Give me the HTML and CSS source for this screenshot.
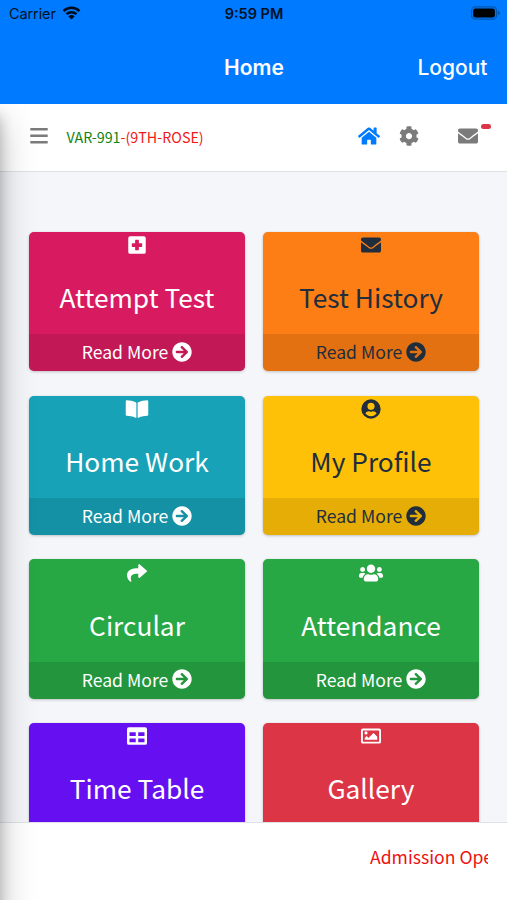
FILE: index.html
```
<!DOCTYPE html>
<html lang="en">
<head>
<meta charset="utf-8">
<title>Home</title>
<link rel="stylesheet" href="styles.css">
</head>
<body>
<svg class="defs" aria-hidden="true">
  <symbol id="arrow" viewBox="0 0 512 512"><path d="M256 8c137 0 248 111 248 248S393 504 256 504 8 393 8 256 119 8 256 8zm-28.900 143.600l75.500 72.400H120c-13.300 0-24 10.700-24 24v16c0 13.300 10.700 24 24 24h182.600l-75.500 72.400c-9.700 9.300-9.900 24.800-.4 34.300l11 10.900c9.400 9.400 24.600 9.400 33.900 0L404.300 273c9.400-9.400 9.400-24.600 0-33.900L271.600 106.300c-9.400-9.400-24.600-9.400-33.900 0l-11 10.900c-9.500 9.600-9.300 25.100.4 34.400z"/></symbol>
  <symbol id="envelope" viewBox="0 0 512 512"><path d="M502.300 190.800c3.900-3.100 9.700-.2 9.700 4.700V400c0 26.500-21.500 48-48 48H48c-26.500 0-48-21.500-48-48V195.600c0-5 5.700-7.800 9.700-4.700 22.400 17.400 52.100 39.500 154.100 113.600 21.100 15.400 56.700 47.800 92.200 47.600 35.700.3 72-32.800 92.300-47.600 102-74.100 131.600-96.300 154-113.700zM256 320c23.200.4 56.600-29.200 73.400-41.400 132.700-96.300 142.800-104.700 173.400-128.700 5.800-4.500 9.200-11.500 9.200-18.900v-19c0-26.500-21.500-48-48-48H48c-26.500 0-48 21.500-48 48v19c0 7.400 3.400 14.300 9.200 18.900 30.600 23.900 40.700 32.400 173.400 128.700 16.800 12.200 50.200 41.800 73.400 41.400z"/></symbol>
</svg>

<header class="appbar">
  <div class="status">
    <div class="carrier">Carrier
      <svg class="wifi" viewBox="0 0 18 14"><g fill="none" stroke="currentColor" stroke-width="2.500"><path d="M1 5.100a11.400 11.400 0 0 1 16 0"/><path d="M4 8.200a7.100 7.100 0 0 1 10 0"/></g><path d="M9 13.500 5.900 10.400a4.400 4.400 0 0 1 6.200 0z" fill="currentColor"/></svg>
    </div>
    <div class="clock">9:59 PM</div>
    <svg class="battery" viewBox="0 0 30 14"><rect x=".6" y=".6" width="25.800" height="12.800" rx="3.800" fill="none" stroke="#0055ad" stroke-width="1.200"/><rect x="2.300" y="2.300" width="22.400" height="9.400" rx="2.200"/><path d="M27.800 4.700q2 .6 2 2.300t-2 2.300z" fill="#0055ad"/></svg>
  </div>
  <div class="titlebar"><span></span><h1>Home</h1><a class="logout">Logout</a></div>
</header>

<div class="page">
  <nav class="navbar">
    <svg class="bars" viewBox="0 0 18 16"><path d="M.3 1.300h17.400M.3 7.800h17.400M.3 14.300h17.400" stroke="currentColor" stroke-width="2.500"/></svg>
    <div class="user"><span class="id">VAR-991</span>-(9TH-ROSE)</div>
    <svg class="home" viewBox="0 0 576 512"><path d="M280.400 148.300L96 300.100V464a16 16 0 0 0 16 16l112.100-.3a16 16 0 0 0 15.900-16V368a16 16 0 0 1 16-16h64a16 16 0 0 1 16 16v95.600a16 16 0 0 0 16 16.100L464 480a16 16 0 0 0 16-16V300L295.700 148.300a12.200 12.200 0 0 0-15.300 0zM571.600 251.500L488 182.600V44.100a12 12 0 0 0-12-12h-56a12 12 0 0 0-12 12v72.600L318.500 43a48 48 0 0 0-61 0L4.300 251.500a12 12 0 0 0-1.600 16.900l25.500 31a12 12 0 0 0 16.900 1.600l235.300-193.700a12.200 12.200 0 0 1 15.300 0L530.900 301a12 12 0 0 0 16.900-1.600l25.500-31a12 12 0 0 0-1.700-16.900z"/></svg>
    <svg class="gear" viewBox="0 0 512 512"><path d="M487.400 315.700l-42.600-24.600c4.300-23.200 4.300-47 0-70.200l42.600-24.600c4.900-2.800 7.100-8.600 5.500-14-11.100-35.600-30-67.800-54.700-94.600-3.800-4.100-10-5.100-14.800-2.300L380.800 110c-17.900-15.400-38.500-27.300-60.800-35.100V25.800c0-5.600-3.900-10.500-9.400-11.700-36.700-8.200-74.300-7.800-109.200 0-5.500 1.200-9.400 6.100-9.400 11.700V75c-22.200 7.900-42.800 19.800-60.800 35.100L88.700 85.500c-4.900-2.800-11-1.900-14.800 2.300-24.700 26.700-43.600 58.900-54.700 94.600-1.700 5.400.6 11.200 5.500 14L67.300 221c-4.300 23.200-4.300 47 0 70.200l-42.600 24.600c-4.900 2.800-7.100 8.600-5.500 14 11.100 35.600 30 67.800 54.700 94.600 3.800 4.100 10 5.100 14.800 2.300l42.600-24.600c17.900 15.400 38.500 27.300 60.800 35.100v49.200c0 5.600 3.900 10.500 9.400 11.700 36.700 8.200 74.300 7.800 109.200 0 5.500-1.200 9.400-6.100 9.400-11.700v-49.200c22.200-7.900 42.800-19.800 60.800-35.100l42.600 24.600c4.900 2.800 11 1.900 14.800-2.300 24.700-26.700 43.600-58.900 54.700-94.600 1.500-5.500-.7-11.300-5.600-14.100zM256 336c-44.100 0-80-35.900-80-80s35.900-80 80-80 80 35.900 80 80-35.900 80-80 80z"/></svg>
    <div class="mail"><svg><use href="#envelope"/></svg><i class="badge"></i></div>
  </nav>

  <main class="grid">
    <a class="card pink">
      <svg class="icon" viewBox="0 0 448 512"><path fill-rule="evenodd" d="M48 32h352a48 48 0 0 1 48 48v352a48 48 0 0 1-48 48H48a48 48 0 0 1-48-48V80a48 48 0 0 1 48-48zM188 124q-12 0-12 12v72h-72q-12 0-12 12v72q0 12 12 12h72v72q0 12 12 12h72q12 0 12-12v-72h72q12 0 12-12v-72q0-12-12-12h-72v-72q0-12-12-12z"/></svg>
      <h2>Attempt Test</h2><div class="more">Read More <svg><use href="#arrow"/></svg></div>
    </a>
    <a class="card orange">
      <svg class="icon" viewBox="0 0 512 512"><use href="#envelope"/></svg>
      <h2>Test History</h2><div class="more">Read More <svg><use href="#arrow"/></svg></div>
    </a>
    <a class="card teal">
      <svg class="icon" viewBox="0 0 576 512"><path d="M542.200 32.100c-54.800 3.100-163.700 14.400-231 55.600-4.600 2.800-7.300 7.900-7.300 13.200v363.900c0 11.600 12.600 18.900 23.300 13.500 69.200-34.800 169.200-44.300 218.700-46.900 16.900-.9 30-14.400 30-30.700V62.800c.1-17.700-15.300-31.700-33.700-30.700zM264.700 87.600C197.500 46.400 88.600 35.200 33.800 32.100 15.400 31 0 45 0 62.800V400.600c0 16.300 13.100 29.900 30.100 30.700 49.500 2.600 149.600 12.100 218.800 46.900 10.600 5.400 23.200-1.900 23.200-13.400V100.700c0-5.300-2.700-10.300-7.400-13.100z"/></svg>
      <h2>Home Work</h2><div class="more">Read More <svg><use href="#arrow"/></svg></div>
    </a>
    <a class="card yellow">
      <svg class="icon" viewBox="0 0 512 512"><path fill-rule="evenodd" d="M256 8a248 248 0 1 1 0 496 248 248 0 0 1 0-496zm0 88a92 92 0 1 0 0 184 92 92 0 0 0 0-184zm0 344c58 0 109-25 143-66-18-35-53-58-95-58-9 0-23 12-48 12s-38-12-48-12c-42 0-77 23-95 58 34 41 85 66 143 66z"/></svg>
      <h2>My Profile</h2><div class="more">Read More <svg><use href="#arrow"/></svg></div>
    </a>
    <a class="card green">
      <svg class="icon" viewBox="0 0 512 512"><path d="M503.700 189.800L327.700 37.900C312.300 24.500 288 35.300 288 56v80.100C127.400 137.900 0 170.100 0 322.300c0 61.400 39.600 122.300 83.300 154.100 13.700 9.900 33.100-2.500 28.100-18.600C66.100 312.800 132.900 274.300 288 272.100V360c0 20.700 24.300 31.500 39.700 18.200l176-152c11.100-9.600 11.100-26.800 0-36.400z"/></svg>
      <h2>Circular</h2><div class="more">Read More <svg><use href="#arrow"/></svg></div>
    </a>
    <a class="card green">
      <svg class="icon" viewBox="0 0 640 512"><path d="M96 224c35.300 0 64-28.700 64-64s-28.700-64-64-64-64 28.700-64 64 28.700 64 64 64zm448 0c35.300 0 64-28.700 64-64s-28.700-64-64-64-64 28.700-64 64 28.700 64 64 64zm32 32h-64c-17.600 0-33.500 7.100-45.100 18.600 40.300 22.100 68.900 62 75.100 109.400h66c17.700 0 32-14.300 32-32v-32c0-35.300-28.700-64-64-64zm-256 0c61.900 0 112-50.100 112-112S381.900 32 320 32 208 82.100 208 144s50.100 112 112 112zm76.800 32h-8.300c-20.800 10-43.900 16-68.500 16s-47.600-6-68.500-16h-8.300C179.600 288 128 339.600 128 403.200V432c0 26.500 21.500 48 48 48h288c26.500 0 48-21.500 48-48v-28.800c0-63.600-51.600-115.200-115.200-115.200zm-223.700-13.400C161.500 263.100 145.600 256 128 256H64c-35.300 0-64 28.700-64 64v32c0 17.700 14.300 32 32 32h65.900c6.300-47.400 34.900-87.300 75.200-109.400z"/></svg>
      <h2>Attendance</h2><div class="more">Read More <svg><use href="#arrow"/></svg></div>
    </a>
    <a class="card indigo">
      <svg class="icon" viewBox="0 0 512 512"><path fill-rule="evenodd" d="M48 32h416a48 48 0 0 1 48 48v352a48 48 0 0 1-48 48H48a48 48 0 0 1-48-48V80a48 48 0 0 1 48-48zM64 160v96h160v-96zm224 0v96h160v-96zM64 320v96h160v-96zm224 0v96h160v-96z"/></svg>
      <h2>Time Table</h2>
    </a>
    <a class="card red">
      <svg class="icon" viewBox="0 0 512 512"><path fill-rule="evenodd" d="M48 64h416a48 48 0 0 1 48 48v288a48 48 0 0 1-48 48H48a48 48 0 0 1-48-48V112a48 48 0 0 1 48-48zm6 48q-6 0-6 6v276q0 6 6 6h404q6 0 6-6V118q0-6-6-6zM128 136a40 40 0 1 1 0 80 40 40 0 0 1 0-80zM96 352v-48l39.500-39.500q8.500-8.500 17 0L192 304l119.500-119.500q8.500-8.500 17 0L416 272v80z"/></svg>
      <h2>Gallery</h2>
    </a>
  </main>

  <footer class="ticker"><div class="ticker-view"><span>Admission Open</span></div></footer>
</div>
</body>
</html>
```
FILE: styles.css
```
* { box-sizing: border-box; }
body {
  margin: 0;
  height: 900px;
  overflow: hidden;
  display: flex;
  flex-direction: column;
  background: #f4f6f9;
  font-family: "Noto Sans CJK SC", "Open Sans", sans-serif;
}
svg { display: block; fill: currentColor; }
h1, h2 { margin: 0; font-weight: 400; }
.defs { position: absolute; width: 0; height: 0; }

.appbar {
  flex: none;
  height: 103.500px;
  background: #007aff;
  font-family: Inter, sans-serif;
}
.status {
  display: grid;
  grid-template-columns: 1fr auto 1fr;
  align-items: center;
  height: 28px;
  padding: 0 7px 0 9px;
  color: #001126;
  font-size: 14.500px;
}
.carrier { display: flex; align-items: center; gap: 6px; margin-top: -2px; letter-spacing: -.1px; }
.wifi { width: 19px; height: 14px; margin-top: -1px; color: #000b1a; }
.clock { font-weight: 600; margin-top: -1px; margin-right: 1px; }
.battery { width: 29px; height: 14px; justify-self: end; margin-top: -2px; color: #000; }
.titlebar {
  display: grid;
  grid-template-columns: 1fr auto 1fr;
  align-items: center;
  height: 76px;
  padding: 2px 19.500px 0 20.500px;
  color: #fff;
}
.titlebar h1, .logout { font-size: 21px; font-weight: 600; }
.logout { justify-self: end; font-weight: 550; }

.page {
  position: relative;
  flex: 1;
  min-height: 0;
  overflow: hidden;
  display: flex;
  flex-direction: column;
}
/* shadow cast by the collapsed drawer */
.page::before {
  content: "";
  position: absolute;
  z-index: 5;
  top: 0;
  bottom: -60px;
  left: -300px;
  width: 300px;
  box-shadow: 0 17px 34px rgba(0, 0, 0, .25), 0 12px 12px rgba(0, 0, 0, .22);
}

.navbar {
  flex: none;
  display: flex;
  align-items: center;
  height: 68.500px;
  padding: 0 16px 2px 29.500px;
  background: #fff;
  border-bottom: 1px solid #dee2e6;
  color: #7b7b7b;
}
.bars { width: 18px; height: 16px; }
.user { margin: 2px 0 0 19px; font-size: 14.300px; line-height: 20px; color: #f01818; white-space: nowrap; }
.user .id { color: #108410; }
.home { width: 22px; height: 20px; margin-left: auto; color: #007bff; }
.gear { width: 20px; height: 20px; margin-left: 19px; }
.mail { position: relative; margin-left: 39px; margin-right: 13px; }
.mail svg { width: 20px; height: 20px; }
.badge {
  position: absolute;
  left: 23px;
  top: -2px;
  width: 10px;
  height: 5px;
  border-radius: 2.500px;
  background: #dc3545;
}

.grid {
  flex: 1;
  min-height: 0;
  overflow: hidden;
  display: grid;
  grid-template-columns: 216px 216px;
  grid-auto-rows: 139.400px;
  gap: 24.300px 18px;
  align-content: start;
  padding: 60px 28px 0 29px;
}
.card {
  display: flex;
  flex-direction: column;
  align-items: center;
  overflow: hidden;
  border-radius: 5px;
  color: #fff;
  box-shadow: 0 1px 3px rgba(0, 0, 0, .2), 0 0 1px rgba(0, 0, 0, .13);
}
.icon { height: 20px; width: 24px; margin: 3.400px 1px 0 0; }
.card h2 {
  margin-top: 21.900px;
  height: 40px;
  line-height: 40px;
  font-size: 26.300px;
  white-space: nowrap;
}
.more {
  display: flex;
  align-items: center;
  justify-content: center;
  gap: 4px;
  align-self: stretch;
  margin-top: auto;
  height: 37px;
  padding-bottom: 2px;
  background: rgba(0, 0, 0, .1);
  font-size: 17.600px;
  line-height: 35px;
}
.more svg { width: 20px; height: 20px; }
.pink { background: #d81b60; }
.orange { background: #fd7e14; color: #1f2d3d; }
.teal { background: #17a2b8; }
.yellow { background: #ffc107; color: #1f2d3d; }
.green { background: #28a745; }
.indigo { background: #6610f2; }
.red { background: #dc3545; }

.ticker {
  flex: none;
  height: 78px;
  padding: 20px 19px 0 29px;
  background: #fff;
  border-top: 1px solid #dee2e6;
}
.ticker-view {
  height: 30px;
  padding-left: 341px;
  overflow: hidden;
  color: #ef1010;
  font-size: 17.600px;
  line-height: 28px;
  white-space: nowrap;
}
```
